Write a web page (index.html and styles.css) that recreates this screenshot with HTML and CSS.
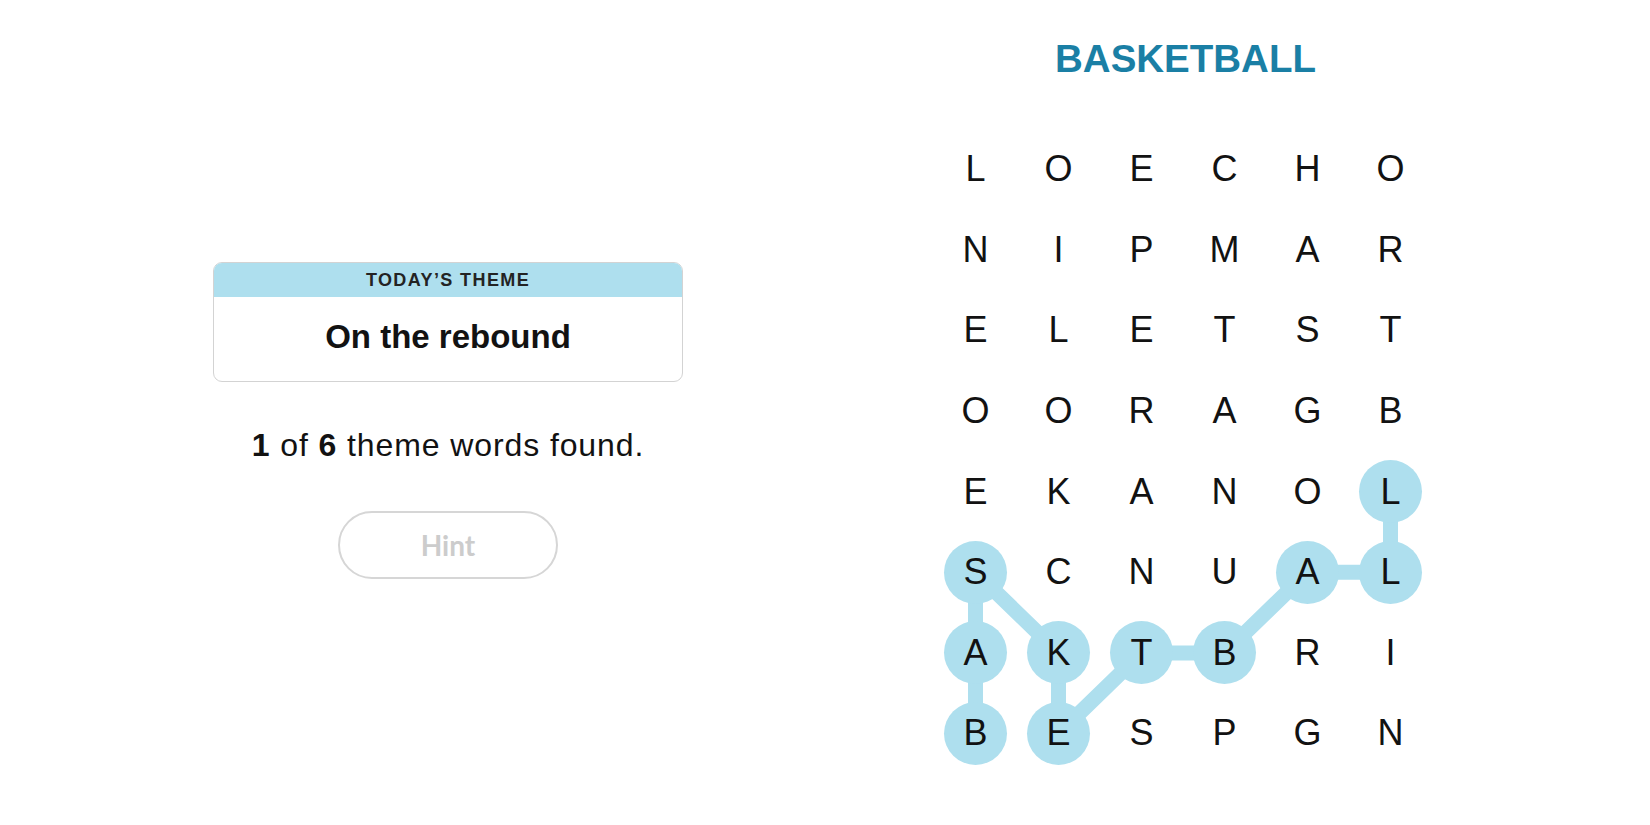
FILE: index.html
```html
<!DOCTYPE html>
<html lang="en">
<head>
<meta charset="utf-8">
<title>Strands</title>
<link rel="stylesheet" href="styles.css">
</head>
<body>
<main class="game">
  <section class="side">
    <div class="theme-card">
      <div class="theme-head">TODAY’S THEME</div>
      <div class="theme-body">On the rebound</div>
    </div>
    <p class="progress"><b>1</b> of <b>6</b> theme words found.</p>
    <button class="hint" type="button">Hint</button>
  </section>
  <section class="board">
    <h1 class="word">BASKETBALL</h1>
    <div class="grid-wrap">
      <svg class="links" width="498" height="645" viewBox="0 0 498 645">
        <path d="M41.5 604.5 L41.5 523.9 L41.5 443.3 L124.5 523.9 L124.5 604.5 L207.5 523.9 L290.5 523.9 L373.5 443.3 L456.5 443.3 L456.5 362.7" fill="none" stroke="#aedfee" stroke-width="15" stroke-linejoin="round"/>
      </svg>
      <div class="grid">
        <div class="cell"><span>L</span></div><div class="cell"><span>O</span></div><div class="cell"><span>E</span></div><div class="cell"><span>C</span></div><div class="cell"><span>H</span></div><div class="cell"><span>O</span></div>
        <div class="cell"><span>N</span></div><div class="cell"><span>I</span></div><div class="cell"><span>P</span></div><div class="cell"><span>M</span></div><div class="cell"><span>A</span></div><div class="cell"><span>R</span></div>
        <div class="cell"><span>E</span></div><div class="cell"><span>L</span></div><div class="cell"><span>E</span></div><div class="cell"><span>T</span></div><div class="cell"><span>S</span></div><div class="cell"><span>T</span></div>
        <div class="cell"><span>O</span></div><div class="cell"><span>O</span></div><div class="cell"><span>R</span></div><div class="cell"><span>A</span></div><div class="cell"><span>G</span></div><div class="cell"><span>B</span></div>
        <div class="cell"><span>E</span></div><div class="cell"><span>K</span></div><div class="cell"><span>A</span></div><div class="cell"><span>N</span></div><div class="cell"><span>O</span></div><div class="cell"><span class="found">L</span></div>
        <div class="cell"><span class="found">S</span></div><div class="cell"><span>C</span></div><div class="cell"><span>N</span></div><div class="cell"><span>U</span></div><div class="cell"><span class="found">A</span></div><div class="cell"><span class="found">L</span></div>
        <div class="cell"><span class="found">A</span></div><div class="cell"><span class="found">K</span></div><div class="cell"><span class="found">T</span></div><div class="cell"><span class="found">B</span></div><div class="cell"><span>R</span></div><div class="cell"><span>I</span></div>
        <div class="cell"><span class="found">B</span></div><div class="cell"><span class="found">E</span></div><div class="cell"><span>S</span></div><div class="cell"><span>P</span></div><div class="cell"><span>G</span></div><div class="cell"><span>N</span></div>
      </div>
    </div>
  </section>
</main>
</body>
</html>
```
FILE: styles.css
```css
* { box-sizing: border-box; }
html, body { margin: 0; padding: 0; background: #fff; }
body {
  font-family: "Liberation Sans", Arial, sans-serif;
  color: #121212;
  width: 1650px;
  height: 825px;
  overflow: hidden;
}
.game {
  display: flex;
  align-items: flex-start;
}
.side {
  width: 896px;
  padding-top: 262px;
  display: flex;
  flex-direction: column;
  align-items: center;
}
.theme-card {
  width: 470px;
  border: 1px solid #d3d3d3;
  border-radius: 9px;
  overflow: hidden;
}
.theme-head {
  height: 34px;
  line-height: 35px;
  background: #aedfee;
  text-align: center;
  font-size: 18px;
  font-weight: 700;
  letter-spacing: 1.4px;
  color: #232323;
}
.theme-body {
  padding: 20px 0 24px;
  text-align: center;
  font-size: 33px;
  line-height: 40px;
  font-weight: 700;
  color: #121212;
}
.progress {
  margin: 45px 0 0;
  font-size: 32px;
  line-height: 36px;
  letter-spacing: 0.9px;
  color: #121212;
}
.progress b { font-weight: 700; }
.hint {
  margin-top: 48px;
  width: 220px;
  height: 68px;
  border: 2px solid #d6d6d6;
  border-radius: 34px;
  background: #fff;
  font-family: Lato, "Liberation Sans", sans-serif;
  font-weight: 700;
  font-size: 28px;
  color: #cccccc;
  display: flex;
  align-items: center;
  justify-content: center;
  padding: 0;
}
.board {
  width: 574px;
  padding-top: 36px;
  display: flex;
  flex-direction: column;
  align-items: center;
}
.word {
  margin: 0;
  padding-left: 5px;
  font-size: 38.5px;
  line-height: 46px;
  font-weight: 700;
  color: #1a7fa5;
}
.grid-wrap {
  position: relative;
  margin-top: 47px;
  width: 498px;
  height: 645px;
}
.links {
  position: absolute;
  left: 0;
  top: 0;
}
.grid {
  position: relative;
  display: grid;
  grid-template-columns: repeat(6, 83px);
  grid-template-rows: repeat(8, 80.6px);
}
.cell {
  display: flex;
  align-items: center;
  justify-content: center;
}
.cell span {
  width: 63px;
  height: 63px;
  border-radius: 50%;
  display: flex;
  align-items: center;
  justify-content: center;
  font-size: 36px;
  line-height: 1;
  color: #121212;
}
.cell span.found {
  background: #aedfee;
}
```
